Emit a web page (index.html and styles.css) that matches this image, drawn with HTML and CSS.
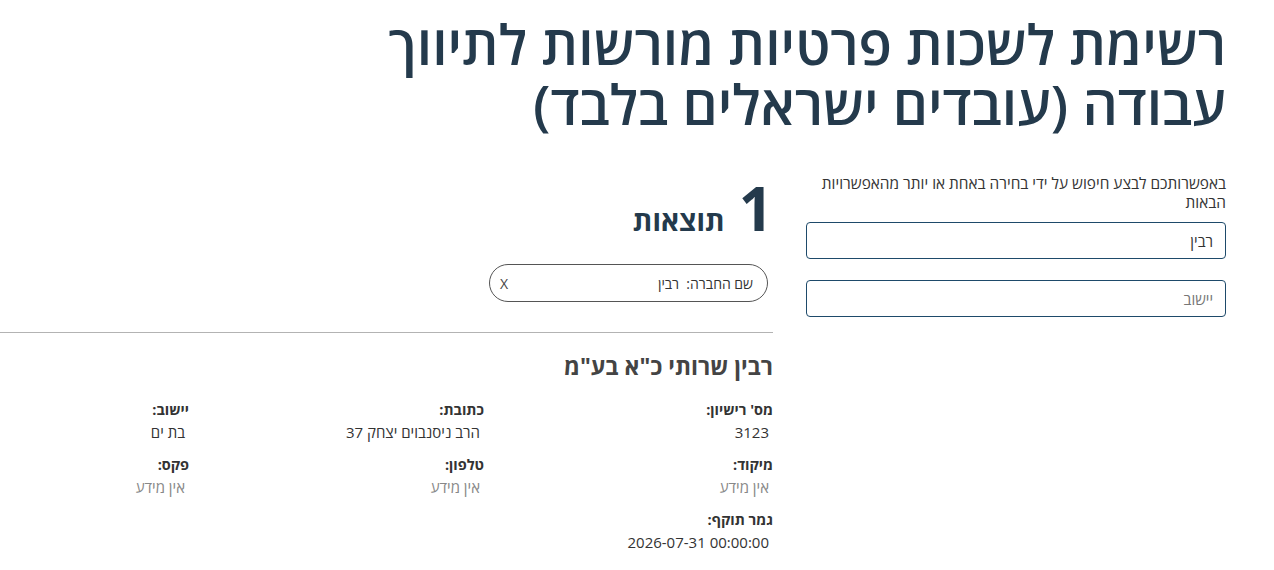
FILE: index.html
```html
<!DOCTYPE html>
<html lang="he" dir="rtl">
<head>
<meta charset="utf-8">
<title>רשימת לשכות פרטיות מורשות לתיווך עבודה</title>
<link rel="stylesheet" href="styles.css">
</head>
<body>
<div class="page">
  <h1 class="title">רשימת לשכות פרטיות מורשות לתיווך עבודה (עובדים ישראלים בלבד)</h1>
  <div class="main">
    <aside class="search">
      <p class="search-hint">באפשרותכם לבצע חיפוש על ידי בחירה באחת או יותר מהאפשרויות הבאות</p>
      <div class="field"><input class="input" type="text" value="רבין"></div>
      <div class="field"><input class="input" type="text" placeholder="יישוב"></div>
    </aside>
    <section class="results">
      <div class="results-head">
        <span class="count">1</span>
        <span class="count-label">תוצאות</span>
      </div>
      <div class="chips">
        <div class="chip">
          <span class="chip-text">שם החברה:&nbsp; רבין</span>
          <span class="chip-x">X</span>
        </div>
      </div>
      <hr class="divider">
      <article class="item">
        <h2 class="item-name">רבין שרותי כ"א בע"מ</h2>
        <div class="item-grid">
          <div class="prop"><div class="prop-label">מס' רישיון:</div><div class="prop-value">3123</div></div>
          <div class="prop"><div class="prop-label">כתובת:</div><div class="prop-value">הרב ניסנבוים יצחק 37</div></div>
          <div class="prop"><div class="prop-label">יישוב:</div><div class="prop-value">בת ים</div></div>
          <div class="prop"><div class="prop-label">מיקוד:</div><div class="prop-value empty">אין מידע</div></div>
          <div class="prop"><div class="prop-label">טלפון:</div><div class="prop-value empty">אין מידע</div></div>
          <div class="prop"><div class="prop-label">פקס:</div><div class="prop-value empty">אין מידע</div></div>
          <div class="prop"><div class="prop-label">גמר תוקף:</div><div class="prop-value"><span class="ltr">2026-07-31 00:00:00</span></div></div>
        </div>
      </article>
    </section>
  </div>
</div>
</body>
</html>
```
FILE: styles.css
```css
html, body {
  margin: 0;
  padding: 0;
  background: #fff;
}
body {
  font-family: "Open Sans", "DejaVu Sans", sans-serif;
  color: #333;
  direction: rtl;
}
.page {
  padding: 14px 48px 0 0;
}
.title {
  margin: 0;
  width: 860px;
  font-size: 55px;
  line-height: 60px;
  font-weight: 600;
  color: #243a4c;
}
.main {
  display: flex;
  gap: 33px;
  margin-top: 36px;
}
.search {
  width: 420px;
  flex: none;
}
.search-hint {
  margin: 4px 0 10px;
  font-size: 15.4px;
  line-height: 19px;
  font-weight: 500;
  color: #333;
  padding-left: 6px;
}
.field {
  margin-bottom: 21px;
}
.input {
  box-sizing: border-box;
  width: 100%;
  height: 37px;
  border: 1px solid #1e4a6a;
  border-radius: 4px;
  padding: 0 12px;
  font-family: inherit;
  font-size: 15px;
  color: #333;
  direction: rtl;
  background: #fff;
}
.input::placeholder {
  color: #777;
}
.results {
  flex: 1;
}
.results-head {
  display: flex;
  align-items: baseline;
  gap: 14px;
  height: 60px;
  margin-top: 10px;
}
.count {
  font-size: 60px;
  line-height: 56px;
  font-weight: 700;
  color: #243a4c;
}
.count-label {
  font-size: 28px;
  font-weight: 700;
  color: #243a4c;
}
.chips {
  margin-top: 24px;
  padding-right: 5px;
}
.chip {
  box-sizing: border-box;
  width: 279px;
  height: 38px;
  border: 1px solid #555;
  border-radius: 20px;
  display: flex;
  align-items: center;
  justify-content: space-between;
  padding: 0 14px 0 10px;
  font-size: 14px;
}
.chip-x {
  font-size: 14px;
  color: #444;
}
.divider {
  margin: 30px 0 0;
  border: 0;
  border-top: 1px solid #b3b3b3;
}
.item-name {
  margin: 18px 0 0;
  font-size: 23px;
  line-height: 30px;
  font-weight: 700;
  color: #444;
}
.item-grid {
  display: grid;
  grid-template-columns: 289px 295px 188px;
  margin-top: 18px;
}
.prop {
  height: 55px;
}
.prop-label {
  font-size: 14.5px;
  line-height: 22px;
  font-weight: 700;
  color: #333;
}
.prop-value {
  font-size: 15px;
  line-height: 22px;
  padding-right: 4px;
  color: #333;
}
.prop-value.empty {
  color: #888;
}
.ltr {
  direction: ltr;
  unicode-bidi: isolate;
  display: inline-block;
}
```
